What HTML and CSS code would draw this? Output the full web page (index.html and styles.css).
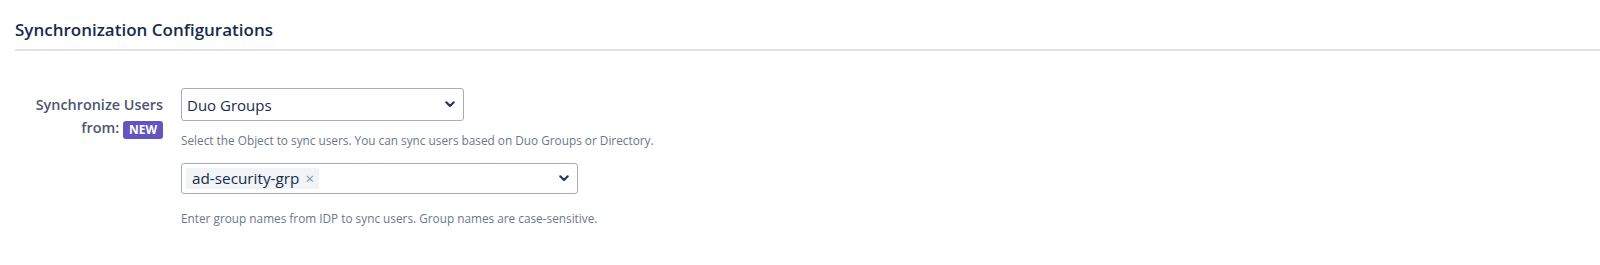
FILE: index.html
```html
<!DOCTYPE html>
<html lang="en">
<head>
    <meta charset="UTF-8">
    <meta name="viewport" content="width=device-width, initial-scale=1.0">
    <title>Synchronization Configurations</title>
    <link rel="stylesheet" href="styles.css">
</head>
<body>
    <div class="section">
        <h2 class="section-title">Synchronization Configurations</h2>

        <div class="field-row">
            <label class="field-label">Synchronize Users from: <span class="badge-new">NEW</span></label>
            <div class="field-body">
                <div class="select-box">
                    <span>Duo Groups</span>
                    <svg class="chevron" width="10" height="7" viewBox="0 0 10 7"><path d="M1.3 1.3 L5 5 L8.7 1.3" fill="none" stroke="#253858" stroke-width="2.2" stroke-linecap="round" stroke-linejoin="round"/></svg>
                </div>
                <div class="help-text">Select the Object to sync users. You can sync users based on Duo Groups or Directory.</div>

                <div class="multi-select">
                    <span class="chip">ad-security-grp<span class="chip-x">×</span></span>
                    <svg class="chevron" width="10" height="7" viewBox="0 0 10 7"><path d="M1.3 1.3 L5 5 L8.7 1.3" fill="none" stroke="#253858" stroke-width="2.2" stroke-linecap="round" stroke-linejoin="round"/></svg>
                </div>
                <div class="help-text help-gap">Enter group names from IDP to sync users. Group names are case-sensitive.</div>
            </div>
        </div>
    </div>
</body>
</html>
```

FILE: styles.css
```css
body {
    margin: 0;
    background: #fff;
    font-family: 'Open Sans', 'Noto Sans', sans-serif;
    color: #172b4d;
}

.section {
    padding: 20px 0 0 15px;
}

.section-title {
    margin: 0;
    font-size: 17px;
    line-height: 20px;
    font-weight: 600;
    color: #172b4d;
    padding-bottom: 9px;
    border-bottom: 2px solid #dfe1e6;
}

.field-row {
    display: flex;
    margin-top: 37px;
}

.field-label {
    width: 148px;
    text-align: right;
    font-size: 14.4px;
    font-weight: 600;
    color: #4a5870;
    line-height: 23px;
    padding-top: 5px;
}

.badge-new {
    display: inline-block;
    background: #6554c0;
    color: #fff;
    font-size: 12px;
    font-weight: 700;
    line-height: 18px;
    padding: 0 6px;
    border-radius: 3px;
    vertical-align: -1px;
}

.field-body {
    margin-left: 18px;
}

.select-box {
    box-sizing: border-box;
    width: 283px;
    height: 33px;
    border: 1px solid #a5adba;
    border-radius: 3px;
    display: flex;
    align-items: center;
    justify-content: space-between;
    padding: 0 8px 0 5px;
    font-size: 15px;
    color: #172b4d;
}

.help-text {
    font-size: 11.8px;
    line-height: 16px;
    color: #6b778c;
    margin-top: 11px;
}

.multi-select {
    box-sizing: border-box;
    margin-top: 15px;
    width: 397px;
    height: 31px;
    border: 1px solid #a5adba;
    border-radius: 3px;
    display: flex;
    align-items: center;
    justify-content: space-between;
    padding: 0 8px 0 4px;
}

.chip {
    background: #f1f3f6;
    border-radius: 2px;
    font-size: 15.3px;
    color: #172b4d;
    padding: 0 5px 0 6px;
    line-height: 21px;
}

.chip-x {
    color: #8993a4;
    font-size: 15px;
    margin-left: 6px;
}

.help-gap {
    margin-top: 16px;
}
```
